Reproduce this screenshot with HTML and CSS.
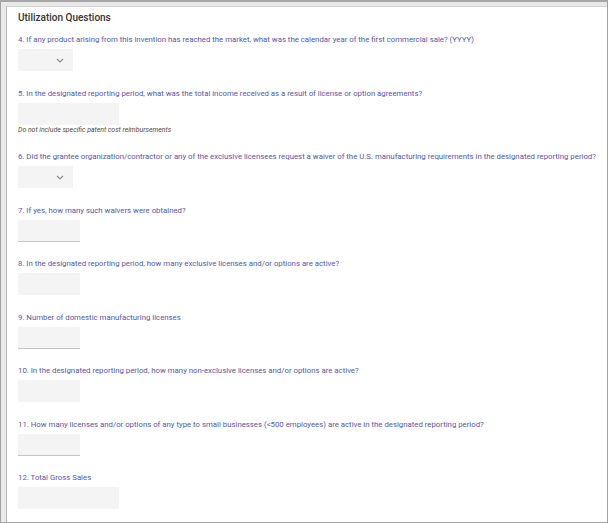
FILE: index.html
```html
<!DOCTYPE html>
<html lang="en">
<head>
  <meta charset="UTF-8" />
  <title>Utilization Questions</title>
  <link rel="stylesheet" href="styles.css">
</head>
<body>

  <div class="frame">
    <div class="panel">
      <h2 class="section-title">Utilization Questions</h2>

      <div class="question">
        <label class="question-label">4. If any product arising from this invention has reached the market, what was the calendar year of the first commercial sale? (YYYY)</label>
        <div class="field field-select">
          <svg class="chevron" width="8" height="5" viewBox="0 0 8 5"><path d="M1 1 L4 4 L7 1" fill="none" stroke="#8a8a8a" stroke-width="1.1"/></svg>
        </div>
      </div>

      <div class="question">
        <label class="question-label">5. In the designated reporting period, what was the total income received as a result of license or option agreements?</label>
        <div class="field field-wide"></div>
        <div class="hint">Do not include specific patent cost reimbursements</div>
      </div>

      <div class="question">
        <label class="question-label">6. Did the grantee organization/contractor or any of the exclusive licensees request a waiver of the U.S. manufacturing requirements in the designated reporting period?</label>
        <div class="field field-select">
          <svg class="chevron" width="8" height="5" viewBox="0 0 8 5"><path d="M1 1 L4 4 L7 1" fill="none" stroke="#8a8a8a" stroke-width="1.1"/></svg>
        </div>
      </div>

      <div class="question">
        <label class="question-label">7. If yes, how many such waivers were obtained?</label>
        <div class="field field-short underlined"></div>
      </div>

      <div class="question">
        <label class="question-label">8. In the designated reporting period, how many exclusive licenses and/or options are active?</label>
        <div class="field field-short"></div>
      </div>

      <div class="question">
        <label class="question-label">9. Number of domestic manufacturing licenses</label>
        <div class="field field-short underlined"></div>
      </div>

      <div class="question">
        <label class="question-label">10. In the designated reporting period, how many non-exclusive licenses and/or options are active?</label>
        <div class="field field-short"></div>
      </div>

      <div class="question">
        <label class="question-label">11. How many licenses and/or options of any type to small businesses (&lt;500 employees) are active in the designated reporting period?</label>
        <div class="field field-short underlined"></div>
      </div>

      <div class="question">
        <label class="question-label">12. Total Gross Sales</label>
        <div class="field field-wide"></div>
      </div>
    </div>
  </div>

</body>
</html>
```

FILE: styles.css
```css
html, body {
  margin: 0;
  padding: 0;
  background: #ffffff;
}

body {
  font-family: Roboto, 'Liberation Sans', Arial, sans-serif;
}

.frame {
  width: 608px;
  height: 523px;
  box-sizing: border-box;
  border: 1px solid #a2a2a2;
  border-top: 2px solid #a8a8a8;
  background: #e9e9e9;
  padding: 4px 0 0 5px;
  overflow: hidden;
}

.panel {
  height: 100%;
  box-sizing: border-box;
  background: #ffffff;
  border-left: 1px solid #b4b4b4;
  border-top: 1px solid #d2d2d2;
  padding: 4px 11px 0 11px;
}

.section-title {
  margin: 0 0 9px 0;
  font-size: 10px;
  line-height: 14px;
  font-weight: 500;
  color: #333333;
}

.question {
  margin-bottom: 16.5px;
}

.question-label {
  display: block;
  font-size: 7.8px;
  line-height: 12px;
  color: #5557a6;
  white-space: nowrap;
}

.field {
  margin-top: 3px;
  height: 22px;
  box-sizing: border-box;
  background: #f4f4f4;
}

.field-select {
  width: 55px;
  display: flex;
  align-items: center;
  justify-content: flex-end;
  padding-right: 9px;
}

.field-short {
  width: 62px;
}

.field-wide {
  width: 101px;
}

.underlined {
  border-bottom: 1px solid #c4c4c4;
}

.hint {
  font-size: 6.9px;
  line-height: 10px;
  font-style: italic;
  color: #4a4a4a;
}
```
